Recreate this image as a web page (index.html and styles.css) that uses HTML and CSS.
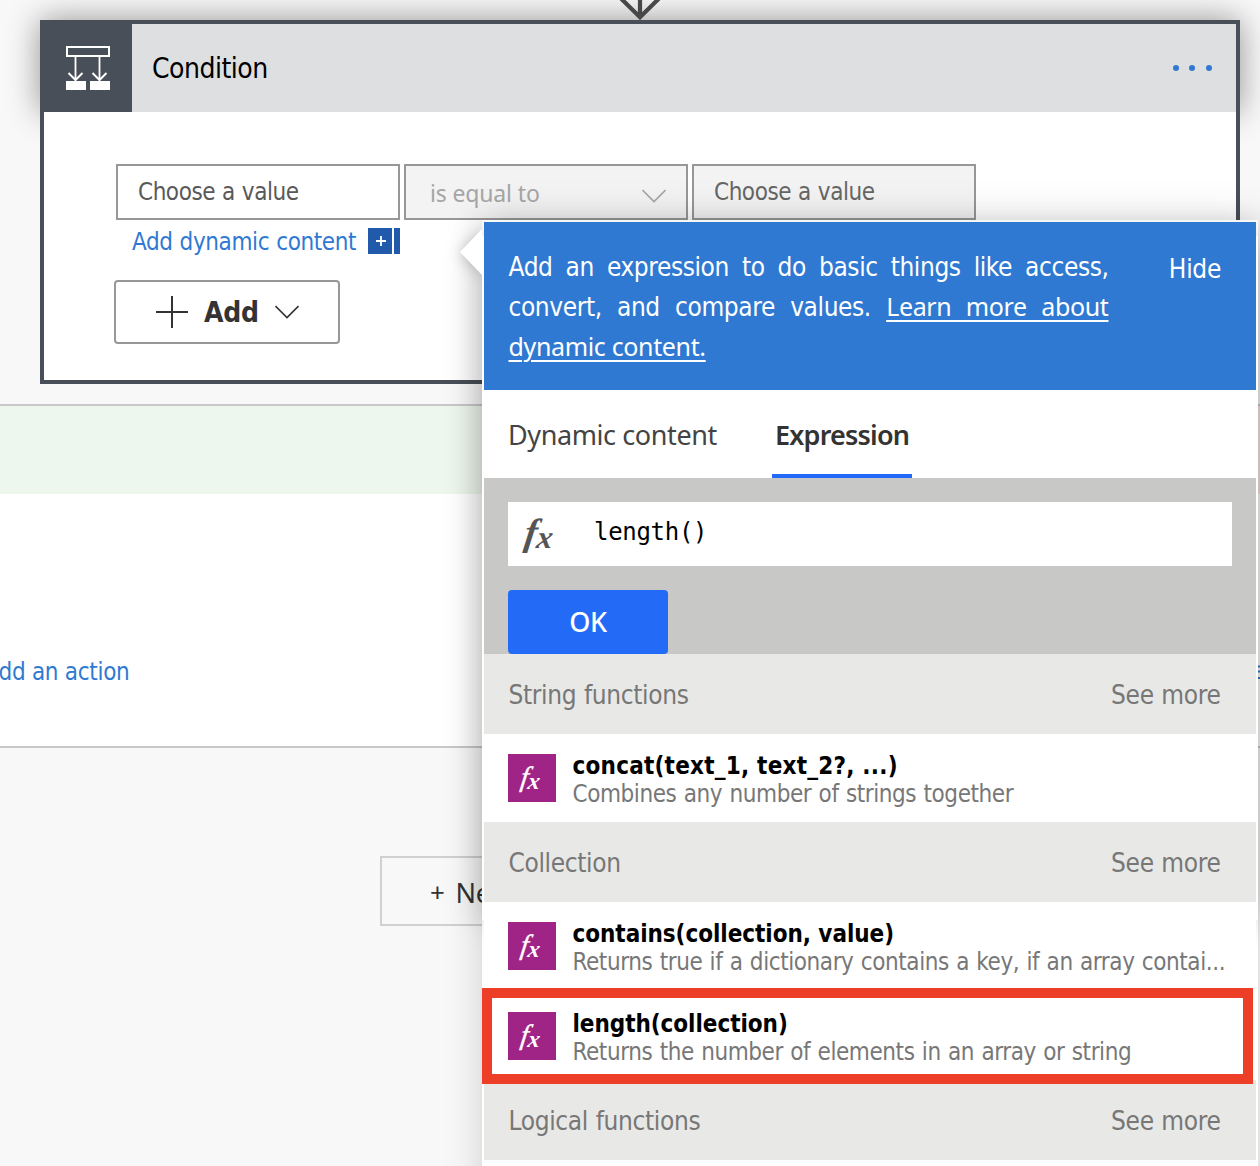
FILE: index.html
```html
<!DOCTYPE html>
<html lang="en">
<head>
<meta charset="utf-8">
<title>Condition</title>
<link rel="stylesheet" href="styles.css">
</head>
<body>
<main class="canvas">
  <div class="connector"><svg width="48" height="20" viewBox="0 0 48 20"><path d="M24 -10V17M4 -2.500L24 17.200L44 -2.500" fill="none" stroke="#484848" stroke-width="4.200"/></svg></div>
  <section class="card">
    <header class="card-head">
      <div class="card-icon"><svg width="44" height="44" viewBox="0 0 44 44" fill="none" stroke="#fff" stroke-width="2"><path d="M1 1H43V10H1Z"/><path d="M9.500 11V33M33.500 11V33" stroke-width="1.800"/><path d="M2.500 27L9.500 34L16.500 27M26.500 27L33.500 34L40.500 27"/><path d="M0 35H20V44H0ZM24 35H44V44H24Z" fill="#fff" stroke="none"/></svg></div>
      <h1 class="card-title">Condition</h1>
      <div class="dots"><i></i><i></i><i></i></div>
    </header>
    <div class="card-body">
      <div class="fields">
        <div class="field first">Choose a value</div>
        <div class="field select"><span>is equal to</span><svg width="24" height="14" viewBox="0 0 24 14"><path d="M.5 1L12 12.500L23.500 1" fill="none" stroke="#a6a6a6" stroke-width="1.600"/></svg></div>
        <div class="field">Choose a value</div>
      </div>
      <div class="dynamic"><span class="dynamic-link">Add dynamic content</span><span class="plus-badge"><svg width="24" height="26" viewBox="0 0 24 26"><path d="M8 13H18M13 8V18" stroke="#fff" stroke-width="1.800"/></svg></span><span class="badge-edge"></span></div>
      <button class="add"><svg width="32" height="32" viewBox="0 0 32 32"><path d="M0 16H32M16 0V32" stroke="#333" stroke-width="2"/></svg><b>Add</b><svg width="24" height="14" viewBox="0 0 24 14"><path d="M.5 1L12 12.500L23.500 1" fill="none" stroke="#333" stroke-width="1.600"/></svg></button>
    </div>
  </section>
  <div class="branches">
    <section class="branch">
      <div class="branch-head"></div>
      <div class="branch-body">Add an action</div>
    </section>
    <section class="branch no">
      <div class="branch-head"></div>
      <svg class="action-icon" width="20" height="16" viewBox="0 0 20 16"><path d="M0 1.500H20M0 6.500H20M0 13H20" stroke="#2f79d2" stroke-width="2"/></svg>
    </section>
  </div>
  <button class="new-step"><span class="small-plus">+</span><span>New step</span></button>

  <aside class="panel">
    <div class="beak"><i></i></div>
    <div class="intro">
      <p><span class="line">Add an expression to do basic things like access,</span><span class="line">convert, and compare values. <u>Learn more about</u></span><span class="line last"><u>dynamic content.</u></span></p>
      <span class="hide">Hide</span>
    </div>
    <nav class="tabs"><span class="tab">Dynamic content</span><span class="tab active">Expression</span></nav>
    <div class="editor">
      <div class="formula"><span class="fx">f<sub>x</sub></span><code>length()</code></div>
      <button class="ok">OK</button>
    </div>
    <div class="group"><span>String functions</span><span>See more</span></div>
    <div class="item"><span class="tile"><span class="fx">f<sub>x</sub></span></span><div class="item-text"><b class="wide">concat(text_1, text_2?, ...)</b><span>Combines any number of strings together</span></div></div>
    <div class="group"><span>Collection</span><span>See more</span></div>
    <div class="item"><span class="tile"><span class="fx">f<sub>x</sub></span></span><div class="item-text"><b>contains(collection, value)</b><span>Returns true if a dictionary contains a key, if an array contai...</span></div></div>
    <div class="item marked"><span class="tile"><span class="fx">f<sub>x</sub></span></span><div class="item-text"><b>length(collection)</b><span>Returns the number of elements in an array or string</span></div></div>
    <div class="group"><span>Logical functions</span><span>See more</span></div>
  </aside>
</main>
</body>
</html>
```
FILE: styles.css
```css
*, *::before { box-sizing: border-box; }
body { margin: 0; background: #f8f8f8; font-family: "DejaVu Sans Condensed", "DejaVu Sans", sans-serif; font-stretch: condensed; letter-spacing: -.3px; }
button { font: inherit; letter-spacing: inherit; padding: 0; }
svg { display: block; }

.canvas { position: relative; z-index: 0; width: 1260px; height: 1166px; overflow: hidden; }
.connector { position: relative; z-index: 1; height: 20px; padding-left: 616px; }

.card { width: 1200px; height: 364px; margin-left: 40px; border: 4px solid #484f58; background: #fff; }
.card-head { position: relative; display: flex; align-items: center; height: 88px; background: #dedfe1; }
.card-head::before { content: ""; position: absolute; z-index: -1; inset: -4px -4px 0; box-shadow: 0 0 32px rgba(0, 0, 0, .42); }
.card-icon { display: flex; justify-content: center; align-items: center; width: 88px; height: 88px; background: #484f58; }
.card-title { margin: 0; padding-left: 20px; font-size: 28px; font-weight: 400; letter-spacing: -.5px; color: #000; }
.dots { display: flex; gap: 10.500px; margin-left: auto; padding-right: 24.500px; }
.dots i { width: 6px; height: 6px; border-radius: 50%; background: #2f79d2; }

.card-body { padding: 52px 70px 0; }
.fields { display: flex; gap: 4px; padding-left: 2px; }
.field { display: flex; align-items: center; width: 284px; height: 56px; padding: 0 20px; border: 2px solid #979797; background: #f3f3f3; font-size: 24px; letter-spacing: -.45px; word-spacing: .6px; color: #666; }
.field.first { background: #fff; color: #595959; }
.field.select { justify-content: space-between; padding: 2px 20px 0 24px; font-family: "Noto Sans", sans-serif; font-size: 23px; letter-spacing: -.15px; word-spacing: 0; color: #a6a6a6; }
.field.select svg { margin-top: 5px; }
.dynamic { display: flex; align-items: center; height: 26px; margin-top: 8px; padding-left: 18px; font-size: 24px; color: #2f79d2; }
.dynamic-link { width: 224px; padding-top: 2px; white-space: nowrap; letter-spacing: -.4px; word-spacing: .6px; }
.plus-badge { width: 24px; margin-left: 12px; background: #2159ab; }
.badge-edge { width: 6px; height: 26px; margin-left: 2px; background: #2159ab; }
.add { display: flex; align-items: center; gap: 16px; width: 226px; height: 64px; margin-top: 26px; padding-left: 40px; border: 2px solid #979797; border-radius: 4px; background: #fff; font-size: 28px; color: #333; }

.branches { display: flex; gap: 20px; width: 1800px; margin-top: 20px; }
.branch { flex: none; width: 1000px; height: 344px; border: solid #c8c8c8; border-width: 2px 0; background: #fff; }
.branch-head { height: 88px; background: #edf7ed; }
.no .branch-head { background: #f9e4e4; }
.branch-body { margin-left: -15.500px; padding-top: 163px; font-size: 24px; line-height: 30px; color: #2f79d2; }
.action-icon { margin: 171px 0 0 238px; }
.new-step { display: flex; align-items: center; gap: 11px; width: 500px; height: 70px; margin: 108px 0 0 380px; padding: 2px 0 0 48px; border: 2px solid #d0d0d0; background: transparent; font: 27px "Noto Sans", sans-serif; color: #333; }
.small-plus { font-size: 26px; }

.panel { position: absolute; z-index: 2; left: 482px; top: 220px; width: 776px; height: 980px; border: 2px solid #fff; background: #fff; box-shadow: 0 0 36px rgba(0, 0, 0, .17); }
.panel::before { content: ""; position: absolute; z-index: -1; left: -2px; right: -2px; top: 14px; height: 684px; background: #fff; box-shadow: 0 0 32px rgba(0, 0, 0, .22); }
.beak { position: absolute; left: -44px; top: -13px; width: 42px; height: 86px; padding: 20px 0 20px 20px; overflow: hidden; filter: drop-shadow(0 2px 7px rgba(0, 0, 0, .22)); clip-path: inset(0); }
.beak i { display: block; width: 22px; height: 46px; background: #fff; clip-path: polygon(0 50%, 100% 0, 100% 100%); }
.intro { display: flex; justify-content: space-between; height: 168px; padding: 25px 35px 0 24.500px; background: #2f79d2; color: #fff; font-size: 26px; line-height: 40px; letter-spacing: -.4px; }
.intro p { width: 600px; margin: 0; }
.line { display: block; height: 40px; text-align-last: justify; white-space: nowrap; }
.line.last { text-align-last: left; }
.intro u { font-family: "Noto Sans", sans-serif; font-size: 25px; line-height: 30px; letter-spacing: -.35px; text-decoration-thickness: 2px; text-underline-offset: 4px; }
.hide { padding-top: 2px; letter-spacing: -.3px; }
.tabs { display: flex; gap: 51px; height: 88px; padding-left: 21px; font-family: "Noto Sans", sans-serif; font-size: 27px; line-height: 89px; color: #444; }
.tab { width: 216px; padding: 0 3px; letter-spacing: -.4px; white-space: nowrap; }
.active { width: 140px; border-bottom: 4px solid #236bf7; font-weight: 600; letter-spacing: -.8px; color: #333; }
.editor { height: 176px; padding: 24px 24px 0; background: #c8c8c7; }
.formula { display: flex; height: 64px; padding: 13px 0 0 16px; background: #fff; }
.formula code { margin-left: 42px; font: 24px/34px "DejaVu Sans Mono", monospace; letter-spacing: -.3px; color: #000; }
.fx { display: inline-block; width: 28px; margin-top: -2px; font: italic bold 38px/38px "Liberation Serif", serif; letter-spacing: 0; color: #555; white-space: nowrap; transform: skewX(-8deg); }
.fx sub { font-size: 32px; line-height: 0; vertical-align: -3px; }
.ok { display: block; width: 160px; height: 64px; margin-top: 24px; padding-bottom: 2px; border: 0; border-radius: 4px; background: #236bf7; color: #fff; font: 500 27px "Noto Sans", sans-serif; }
.group { display: flex; justify-content: space-between; height: 80px; padding: 0 35.500px 0 24.500px; background: #e8e8e6; font-size: 26px; line-height: 83px; letter-spacing: -.35px; word-spacing: .6px; color: #777; }
.item { display: flex; height: 88px; padding: 20px 24px 0; background: #fff; }
.tile { width: 48px; height: 48px; padding: 8px 0 0 13px; background: #9f2486; }
.tile .fx { display: block; margin-top: 0; font-size: 28px; line-height: 30px; font-weight: 400; color: #fff; -webkit-text-stroke: .4px #fff; }
.tile sub { font-size: 24px; font-weight: 700; -webkit-text-stroke: 0; }
.item-text { display: flex; flex-direction: column; margin: -2px 0 0 16.500px; font-size: 24px; line-height: 28px; letter-spacing: -.42px; word-spacing: .9px; color: #777; white-space: nowrap; }
.item-text b { letter-spacing: -.05px; word-spacing: 0; color: #000; }
.item-text .wide { letter-spacing: .22px; }
.marked { position: relative; height: 90px; padding-top: 22px; }
.marked::before { content: ""; position: absolute; z-index: 1; left: -2px; top: -2px; width: 771px; height: 96px; border: 10px solid #ed3f27; }
```
